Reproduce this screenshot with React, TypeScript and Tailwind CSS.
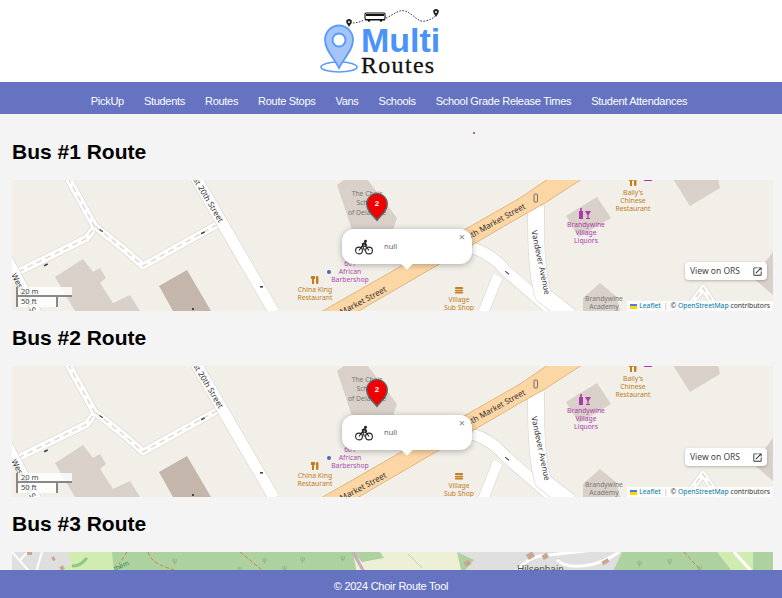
const navItems = [
  'PickUp',
  'Students',
  'Routes',
  'Route Stops',
  'Vans',
  'Schools',
  'School Grade Release Times',
  'Student Attendances',
]

function Logo() {
  return (
    <svg width="160" height="82" viewBox="300 0 160 82" className="block">
      <ellipse cx="339" cy="67" rx="18" ry="5" fill="none" stroke="#5b9bf8" strokeWidth="1.6" />
      <path
        d="M339 68 C334 58 325 50 325 40 a14 14.5 0 0 1 28 0 C353 50 344 58 339 68 Z"
        fill="#a5c4fa"
        stroke="#5b9bf8"
        strokeWidth="1.8"
      />
      <circle cx="339" cy="40" r="6.5" fill="#fff" stroke="#5b9bf8" strokeWidth="2" />
      <path
        d="M350 23 C354 23 358 23 364 20 M386 18 C392 16 398 9 405 11 C414 14 418 23 425 21 C430 20 434 18 436 15"
        fill="none"
        stroke="#222"
        strokeWidth="0.9"
        strokeDasharray="1.6 1.4"
      />
      <path d="M349 27 l-2.5 -4 a2.8 2.8 0 1 1 5 0 Z" fill="#222" />
      <circle cx="349" cy="22" r="1" fill="#fff" />
      <path d="M436 17 l-2.5 -4 a2.8 2.8 0 1 1 5 0 Z" fill="#222" />
      <circle cx="436" cy="12" r="1" fill="#fff" />
      <rect x="365" y="13" width="20" height="6.5" rx="1" fill="#fff" stroke="#111" strokeWidth="1.1" />
      <rect x="366" y="14" width="18" height="2" fill="#111" />
      <path d="M365 20 h20" stroke="#111" strokeWidth="1" />
      <circle cx="369" cy="20.5" r="1.3" fill="#111" />
      <circle cx="381" cy="20.5" r="1.3" fill="#111" />
      <text x="361" y="52" fontFamily="'Liberation Sans', sans-serif" fontWeight="700" fontSize="34" fill="#4a93f8">
        Multi
      </text>
      <text x="361" y="73" fontFamily="'Liberation Serif', serif" fontSize="24" letterSpacing="1.3" fill="#111" stroke="#111" strokeWidth="0.3">
        Routes
      </text>
    </svg>
  )
}

function Road({ d, w = 8, dashed = false }: { d: string; w?: number; dashed?: boolean }) {
  return (
    <>
      <path d={d} fill="none" stroke="#d9d5cf" strokeWidth={w + 1.2} strokeLinejoin="round" />
      <path d={d} fill="none" stroke="#fff" strokeWidth={w} strokeLinejoin="round" />
      {dashed && <path d={d} fill="none" stroke="#dedcd8" strokeWidth="1.6" strokeDasharray="6 4" />}
    </>
  )
}

function Label({ x, y, lines, color }: { x: number; y: number[]; lines: string[]; color: string }) {
  return (
    <>
      {lines.map((line, i) => (
        <text key={line} x={x} y={y[i]} textAnchor="middle" fontSize="6.8" fill={color}>
          {line}
        </text>
      ))}
    </>
  )
}

function FoodIcon({ x, y }: { x: number; y: number }) {
  return (
    <g fill="#c77c1c">
      <rect x={x - 3} y={y - 4} width="2" height="8" />
      <rect x={x + 1} y={y - 4} width="2.4" height="8" rx="1" />
      <rect x={x - 4} y={y - 4} width="4" height="3" />
    </g>
  )
}

function StreetMap() {
  return (
    <svg viewBox="0 0 761 131" className="block w-full h-[131px] font-['Noto_Sans']">
      <rect width="761" height="131" fill="#f2efe9" />

      <polygon points="43,97 71,79 81,92 88,88 94,98 88,103 101,123 118,115 128,131 63,131" fill="#d9d0c9" />
      <polygon points="147,106 175,90 199,131 161,131" fill="#c4b6aa" />
      <polygon points="325,5 333,-1 355,-1 385,38 381,50 340,50" fill="#d9d0c9" />
      <polygon points="661,-1 706,-1 708,8 678,26" fill="#d9d0c9" />
      <polygon points="554,36 585,17 599,38 567,57" fill="#d9d0c9" />
      <polygon points="571,118 588,103 605,117 608,131 571,131" fill="#d9d0c9" />
      <polygon points="741,98 761,72 761,115" fill="#d9d0c9" />

      <Road d="M56 -2 L83 47 L75 58 L6 92" w={7} dashed />
      <Road d="M84 47 L113 70 L131 86 L208 43" w={7} dashed />
      <Road d="M184 -2 L262 132" w={11} />
      <Road d="M-4 78 L26 134" w={8} />
      <Road d="M460 68 C475 72 485 80 495 92 L545 135" w={11} />
      <Road d="M486 96 L471 133" w={10} />
      <Road d="M672 133 L691 108 L708 133" w={6} dashed />
      <Road d="M524 26 C524 60 524 90 531 115 L558 136" w={16} />

      <polygon points="536,-1 570,-1 533,23 508,37 345,132 309,132 508,18" fill="#fcd6a4" stroke="#d9ab6e" strokeWidth="0.8" />
      <rect x="522" y="14" width="3.5" height="8" rx="1" fill="none" stroke="#555" strokeWidth="0.8" />

      <g fill="#444">
        <rect x="32" y="84" width="4" height="1.6" transform="rotate(-25 34 85)" />
        <rect x="189" y="52" width="4" height="1.6" transform="rotate(-28 191 53)" />
        <rect x="87" y="50" width="4" height="1.2" transform="rotate(35 89 51)" />
        <rect x="248" y="106" width="3" height="1.6" />
        <rect x="180" y="128" width="2" height="2" />
        <rect x="493" y="92" width="5" height="1" transform="rotate(38 495 92)" />
      </g>

      <g fontSize="8" fill="#333">
        <text x="207" y="43" textAnchor="end" transform="rotate(59 207 43)">
          West 20th Street
        </text>
        <text x="-1" y="95" transform="rotate(62 -1 95)">
          West 21st Street
        </text>
        <text x="375" y="111" textAnchor="end" transform="rotate(-28 375 111)">
          South Market Street
        </text>
        <text x="514" y="28" textAnchor="end" transform="rotate(-29 514 28)">
          South Market Street
        </text>
        <text x="526" y="83" textAnchor="middle" transform="rotate(78 526 83)">
          Vandever Avenue
        </text>
      </g>

      <Label x={355} y={[16, 25, 35]} lines={['The Choir', 'School', 'of Delaware']} color="#777" />
      <Label x={338} y={[86, 94, 102]} lines={['601', 'African', 'Barbershop']} color="#a94cb0" />
      <circle cx="317" cy="92" r="2" fill="#4a6ab0" />
      <Label x={303} y={[112, 120]} lines={['China King', 'Restaurant']} color="#c07c20" />
      <FoodIcon x={303} y={100} />
      <Label x={447} y={[122, 130]} lines={['Village', 'Sub Shop']} color="#c07c20" />
      <g fill="#c77c1c">
        <rect x="443" y="107" width="8" height="2.2" rx="1" />
        <rect x="443" y="110" width="8" height="1" />
        <rect x="443" y="111.6" width="8" height="1.8" rx="0.6" />
      </g>
      <Label x={621} y={[15, 23, 31]} lines={["Bally's", 'Chinese', 'Restaurant']} color="#c07c20" />
      <FoodIcon x={621} y={2} />
      <rect x="632" y="-1" width="8" height="2" fill="#ac39ac" />
      <Label x={574} y={[47, 55, 63]} lines={['Brandywine', 'Village', 'Liquors']} color="#ac39ac" />
      <g fill="#ac39ac">
        <rect x="567" y="31" width="4" height="8" />
        <rect x="568.2" y="28" width="1.6" height="3" />
        <path d="M573 31 h6 l-2.4 4 v3 h1.4 v1 h-4 v-1 h1.4 v-3 Z" />
      </g>
      <Label x={592} y={[121, 129]} lines={['Brandywine', 'Academy']} color="#777" />
    </svg>
  )
}

function TopoMap() {
  return (
    <svg viewBox="0 0 761 131" className="block w-full h-[131px] font-['Liberation_Sans']">
      <rect width="761" height="131" fill="#aed1a0" />
      <polygon points="0,0 100,0 102,20 0,20" fill="#d0ecb0" />
      <polygon points="0,0 55,0 60,12 38,22 0,22" fill="#dfdfdf" />
      <polygon points="341,0 445,0 450,22 345,22" fill="#eef0d5" />
      <polygon points="341,0 368,0 372,6 350,10" fill="#aed1a0" />
      <polygon points="445,0 610,0 600,22 450,22 462,8" fill="#dfdfdf" />
      <polygon points="705,0 741,0 741,22 722,22" fill="#d0ecb0" />
      <path d="M0 0 L18 20 M16 0 L8 8 M30 0 L24 20" stroke="#fff" strokeWidth="2" fill="none" />
      <path d="M75 6 C68 14 64 14 60 14" stroke="#8fc98a" strokeWidth="3" fill="none" />
      <path d="M115 0 L107 12 M136 0 C140 12 150 14 168 20 M228 0 L250 18 M672 0 L692 22" stroke="#c98a3c" strokeWidth="1" strokeDasharray="4 2" fill="none" />
      <path d="M341 0 L352 20" stroke="#c9a9c0" strokeWidth="3" fill="none" />
      <path d="M722 0 L742 22" stroke="#fff" strokeWidth="3" fill="none" />
      <path d="M502 22 C508 14 516 6 528 4 L582 -2 M545 8 C556 18 585 16 607 0" stroke="#fff" strokeWidth="3" fill="none" />
      <path d="M396 2 L410 16" stroke="#b9d9a4" strokeWidth="1" fill="none" />
      <g fill="#c9a592">
        <rect x="15" y="0" width="5" height="3" />
        <rect x="40" y="5" width="3" height="4" transform="rotate(-30 41 7)" />
        <rect x="48" y="14" width="4" height="4" transform="rotate(-30 50 16)" />
        <rect x="452" y="9" width="6" height="5" transform="rotate(-30 455 11)" />
        <rect x="515" y="1" width="7" height="6" transform="rotate(-30 518 4)" />
        <rect x="530" y="2" width="6" height="5" transform="rotate(-30 533 4)" />
        <rect x="590" y="8" width="7" height="4" transform="rotate(-30 593 10)" />
      </g>
      <g fontSize="7" fill="#8aaa80">
        <text x="160" y="11">ψ</text>
        <text x="250" y="10">ψ</text>
        <text x="288" y="9">ψ</text>
        <text x="328" y="8">ψ</text>
        <text x="225" y="19">ψ</text>
        <text x="270" y="18">ψ</text>
        <text x="625" y="13">ψ</text>
        <text x="655" y="11">ψ</text>
        <text x="685" y="18">ψ</text>
      </g>
      <text x="103" y="19" fontSize="7" fill="#3a8a5a" transform="rotate(-24 103 19)">them</text>
      <text x="505" y="21" fontSize="10" fill="#555">Hilsenhain</text>
    </svg>
  )
}

function BikeIcon() {
  return (
    <svg width="18" height="16" viewBox="0 0 18 16" fill="none" stroke="#222" strokeWidth="1.1">
      <circle cx="4" cy="11.5" r="3.4" />
      <circle cx="14" cy="11.5" r="3.4" />
      <path d="M4 11.5 L7.5 6.5 L11.5 8 L14 11.5 M7.5 6.5 L9.5 11.5" />
      <circle cx="10.5" cy="2.2" r="1.4" fill="#222" stroke="none" />
      <path d="M7 5.5 L10 4 L11.5 7" strokeWidth="2" />
    </svg>
  )
}

function RouteMap({ children }: { children: React.ReactNode }) {
  return (
    <div className="relative overflow-hidden">
      {children}
      <svg width="26" height="32" viewBox="0 0 26 32" className="absolute left-[352px] top-[12px]">
        <path d="M13 29.500 C9 24 2 19 2 12 a11 11 0 0 1 22 0 C24 19 17 24 13 29.500 Z" fill="#333" opacity="0.7" />
        <path d="M13 27 C9 22 3.500 18 3.500 11.500 a9.500 9.500 0 0 1 19 0 C22.500 18 17 22 13 27 Z" fill="#f00000" />
        <text x="13" y="14" textAnchor="middle" fontSize="8" fontWeight="700" fill="#fff" fontFamily="'Liberation Sans', sans-serif">
          2
        </text>
      </svg>
      <div className="absolute left-[330px] top-[49px] flex h-[35px] w-[130px] items-center rounded-xl bg-white pl-[13px] shadow-[0_1px_6px_rgba(0,0,0,0.3)] font-['Noto_Sans'] text-[7.5px] text-[#666]">
        <BikeIcon />
        <span className="ml-[11px]">null</span>
        <span className="absolute right-[7px] top-[1px] text-[11px] leading-[14px] text-[#888]">×</span>
        <div className="absolute left-[61px] top-[31px] size-[8px] rotate-45 bg-white" />
      </div>
      <div className="absolute left-[673px] top-[82px] flex h-[18px] w-[82px] items-center rounded-sm bg-white pl-[5px] font-['Noto_Sans'] text-[8.500px] text-[#444] shadow-[0_1px_3px_rgba(0,0,0,0.25)]">
        <span>View on ORS</span>
        <svg width="11" height="11" viewBox="0 0 24 24" fill="#333" className="ml-auto mr-[4px]">
          <path d="M19 19H5V5h7V3H5a2 2 0 00-2 2v14a2 2 0 002 2h14c1.100 0 2-.9 2-2v-7h-2v7zM14 3v2h3.590l-9.830 9.830 1.410 1.410L19 6.410V10h2V3h-7z" />
        </svg>
      </div>
      <div className="absolute left-[4px] top-[107px] flex flex-col font-['Noto_Sans'] text-[7.5px] leading-[9px] text-[#444]">
        <div className="h-[10px] w-[56px] border-2 border-t-0 border-r-0 border-[#888] border-b-[#888] bg-white/80 pl-[3px]">20 m</div>
        <div className="h-[10px] w-[42px] border-2 border-b-0 border-l-[#888] border-r-[#888] border-t-0 bg-white/80 pl-[3px]">50 ft</div>
      </div>
      <div className="absolute bottom-0 right-0 flex h-[10px] items-center bg-white/80 px-[3px] font-['Noto_Sans'] text-[6.8px] text-[#333]">
        <span className="mr-[2px] inline-flex h-[5px] w-[7px] flex-col">
          <span className="h-[2.500px] bg-[#4c7be1]" />
          <span className="h-[2.500px] bg-[#ffd500]" />
        </span>
        <span className="text-[#0078a8]">Leaflet</span>
        <span className="mx-[3px] text-[#aaa]">|</span>
        <span>©&nbsp;</span>
        <span className="text-[#0078a8]">OpenStreetMap</span>
        <span>&nbsp;contributors</span>
      </div>
    </div>
  )
}

export default function App() {
  return (
    <div className="flex h-[598px] flex-col overflow-hidden bg-[#f4f4f4] font-['Liberation_Sans',Arial,sans-serif]">
      <header className="flex h-[82px] shrink-0 justify-center bg-white pr-[22px]">
        <Logo />
      </header>
      <nav className="flex h-8 shrink-0 items-center justify-center gap-5 bg-[#6573c1] pr-[4px] pt-1.5 text-[11px] tracking-[-0.29px] text-white">
        {navItems.map((item) => (
          <a key={item}>{item}</a>
        ))}
      </nav>
      <main className="relative min-h-0 flex-1 overflow-hidden pl-3 pr-[9px]">
        <div className="absolute left-[473px] top-[18px] size-[2px] rounded-full bg-[#b33]" />
        <h2 className="mb-[14px] mt-6 text-[21px] leading-7 font-bold text-black">Bus #1 Route</h2>
        <RouteMap>
          <StreetMap />
        </RouteMap>
        <h2 className="mb-[14px] mt-[13px] text-[21px] leading-7 font-bold text-black">Bus #2 Route</h2>
        <RouteMap>
          <StreetMap />
        </RouteMap>
        <h2 className="mb-[14px] mt-[13px] text-[21px] leading-7 font-bold text-black">Bus #3 Route</h2>
        <TopoMap />
      </main>
      <footer className="flex h-7 shrink-0 items-center justify-center bg-[#6573c1] pt-1 text-[11px] tracking-[-0.26px] text-white">
        © 2024 Choir Route Tool
      </footer>
    </div>
  )
}
